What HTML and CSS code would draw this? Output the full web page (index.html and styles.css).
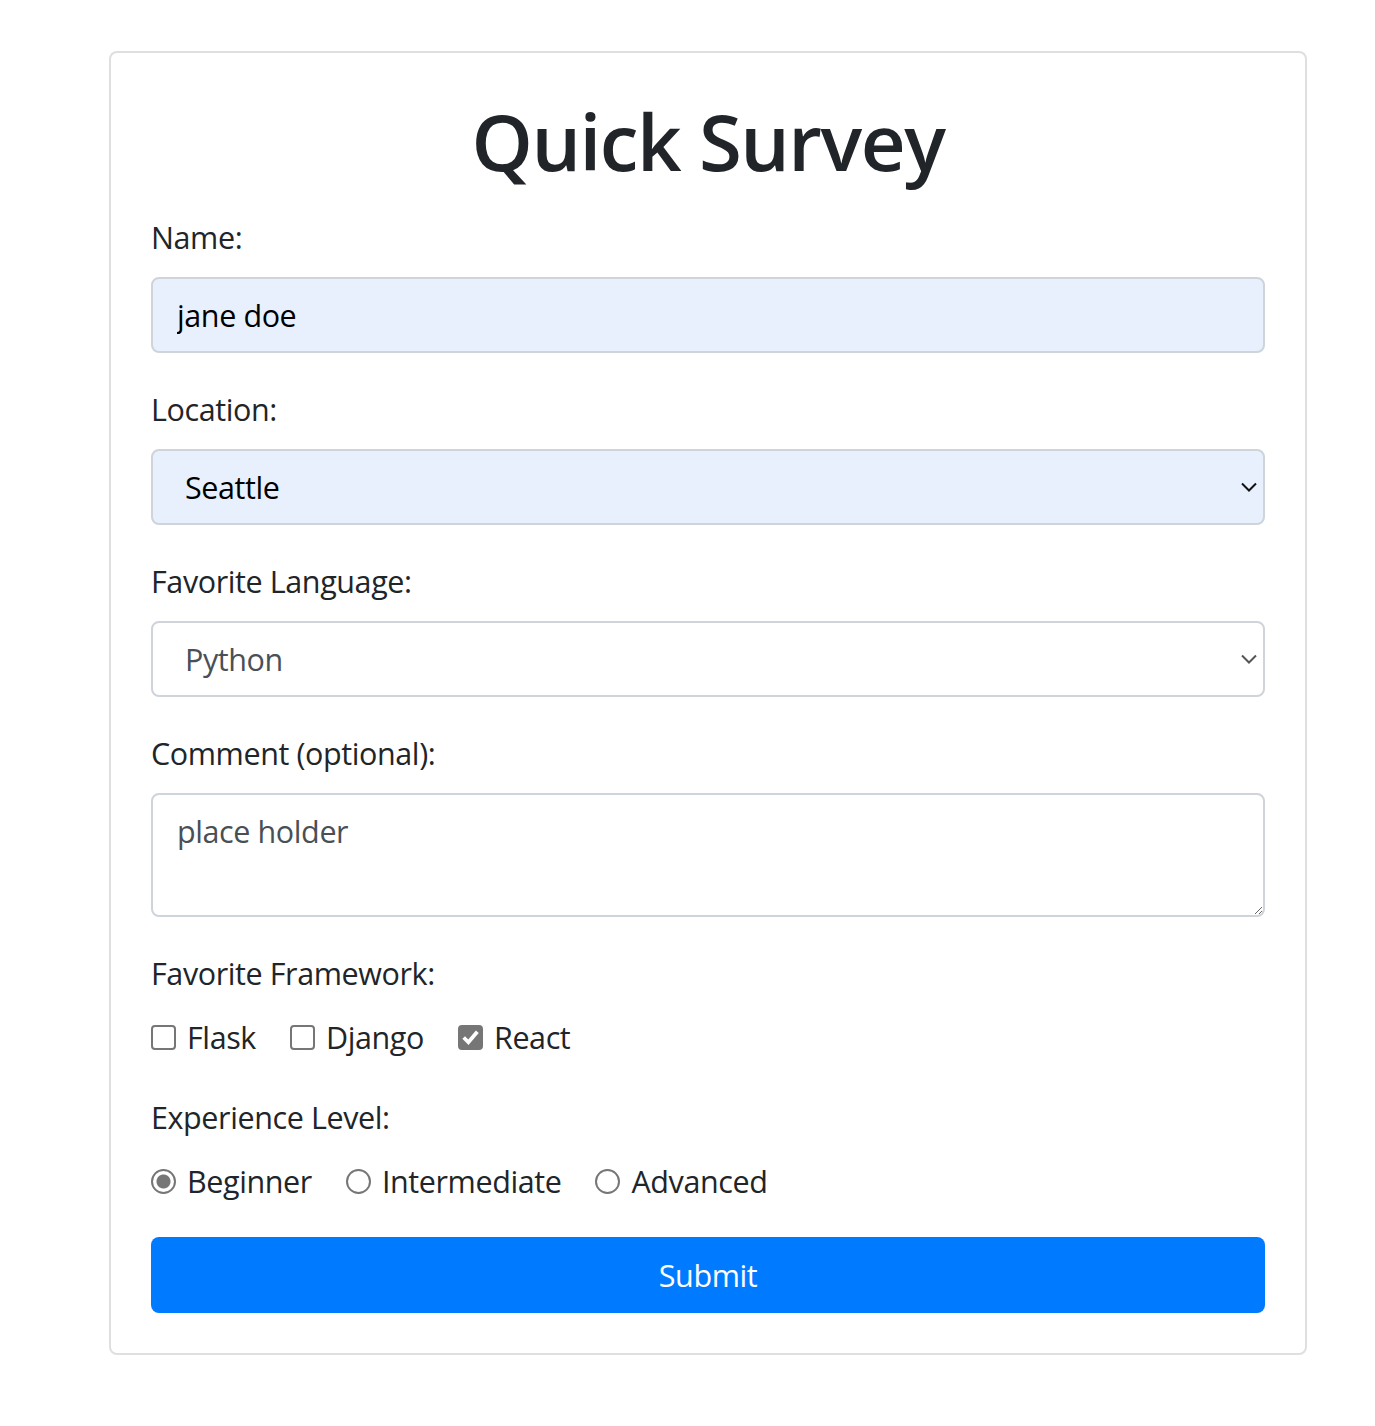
FILE: index.html
```html
<!DOCTYPE html>
<html lang="en">
<head>
<meta charset="utf-8">
<title>Quick Survey</title>
<link rel="stylesheet" href="styles.css">
</head>
<body>
<div class="page">
  <div class="card">
    <h1 class="title">Quick Survey</h1>
    <form class="form">
      <div class="group">
        <label class="label" for="name">Name:</label>
        <input class="control autofill" id="name" type="text" value="jane doe">
      </div>
      <div class="group">
        <label class="label" for="loc">Location:</label>
        <select class="control select autofill" id="loc">
          <option>Seattle</option>
          <option>Portland</option>
        </select>
      </div>
      <div class="group">
        <label class="label" for="lang">Favorite Language:</label>
        <select class="control select plain" id="lang">
          <option>Python</option>
          <option>JavaScript</option>
        </select>
      </div>
      <div class="group">
        <label class="label" for="comment">Comment (optional):</label>
        <textarea class="control area" id="comment" rows="2" placeholder="place holder"></textarea>
      </div>
      <div class="group">
        <div class="label">Favorite Framework:</div>
        <div class="choices">
          <label class="choice"><input class="box" type="checkbox"><span>Flask</span></label>
          <label class="choice"><input class="box" type="checkbox"><span>Django</span></label>
          <label class="choice"><input class="box" type="checkbox" checked><span>React</span></label>
        </div>
      </div>
      <div class="group">
        <div class="label">Experience Level:</div>
        <div class="choices">
          <label class="choice"><input class="radio" type="radio" name="lvl" checked><span>Beginner</span></label>
          <label class="choice"><input class="radio" type="radio" name="lvl"><span>Intermediate</span></label>
          <label class="choice"><input class="radio" type="radio" name="lvl"><span>Advanced</span></label>
        </div>
      </div>
      <button class="submit" type="button">Submit</button>
    </form>
  </div>
</div>
</body>
</html>
```
FILE: styles.css
```css
* { box-sizing: border-box; }

html, body {
  margin: 0;
  padding: 0;
  background: #ffffff;
}

body {
  font-family: "Open Sans", "Noto Sans", sans-serif;
  color: #212529;
  font-size: 30.5px;
  line-height: 48px;
}

.page {
  padding: 51px 0 60px 109px;
}

.card {
  width: 1198px;
  border: 2px solid #dfdfdf;
  border-radius: 8px;
  padding: 40px;
  background: #fff;
}

.title {
  margin: 0 0 24px;
  font-size: 78px;
  line-height: 96px;
  font-weight: 600;
  text-align: center;
  color: #212529;
  letter-spacing: -1.5px;
}

.group {
  margin-bottom: 32px;
}

.label {
  display: block;
  font-size: 30.5px;
  line-height: 48px;
  margin-bottom: 16px;
  color: #212529;
  letter-spacing: -0.4px;
}

.control {
  display: block;
  width: 100%;
  height: 76px;
  padding: 12px 24px;
  border: 2px solid #ced4da;
  border-radius: 8px;
  font-family: inherit;
  font-size: 30.5px;
  line-height: 48px;
  color: #495057;
  background: #fff;
  outline: none;
  letter-spacing: -0.4px;
}

.autofill {
  background-color: #e8f0fe;
  color: #000;
}

.select {
  -webkit-appearance: none;
  appearance: none;
  padding-left: 32px;
  background-repeat: no-repeat;
  background-position: right 6px center;
  background-size: 16px 10px;
}

.select.autofill {
  background-image: url("data:image/svg+xml,%3Csvg xmlns='http://www.w3.org/2000/svg' viewBox='0 0 16 10'%3E%3Cpath d='M1 1.5 L8 8.5 L15 1.5' fill='none' stroke='%23111' stroke-width='2'/%3E%3C/svg%3E");
}

.select.plain {
  background-image: url("data:image/svg+xml,%3Csvg xmlns='http://www.w3.org/2000/svg' viewBox='0 0 16 10'%3E%3Cpath d='M1 1.5 L8 8.5 L15 1.5' fill='none' stroke='%23555' stroke-width='2'/%3E%3C/svg%3E");
}

.area {
  height: 124px;
  resize: vertical;
}

.area::placeholder {
  color: #4a4f55;
  opacity: 1;
}

.choices {
  display: flex;
  align-items: center;
  height: 48px;
}

.choice {
  display: flex;
  align-items: center;
  margin-right: 34px;
  font-size: 30.5px;
  line-height: 48px;
  color: #212529;
  letter-spacing: -0.4px;
}

.choice span {
  margin-left: 11px;
}

.box, .radio {
  -webkit-appearance: none;
  appearance: none;
  margin: 0;
  width: 25px;
  height: 25px;
  border: 2px solid #767676;
  background: #fff;
  flex: none;
}

.box {
  border-radius: 4px;
}

.box:checked {
  background-color: #767676;
  background-image: url("data:image/svg+xml,%3Csvg xmlns='http://www.w3.org/2000/svg' viewBox='0 0 20 20'%3E%3Cpath d='M3.5 10 L8 14.5 L16.5 4.5' fill='none' stroke='%23fff' stroke-width='3.6'/%3E%3C/svg%3E");
  background-size: 100% 100%;
}

.radio {
  border-radius: 50%;
}

.radio:checked {
  background: radial-gradient(circle, #767676 0, #767676 6.5px, #fff 7.5px);
}

.submit {
  display: block;
  width: 100%;
  height: 76px;
  border: none;
  border-radius: 8px;
  background: #007bff;
  color: #fff;
  font-family: inherit;
  font-size: 30.5px;
  line-height: 48px;
  padding: 12px 24px;
  letter-spacing: -0.4px;
}
```
